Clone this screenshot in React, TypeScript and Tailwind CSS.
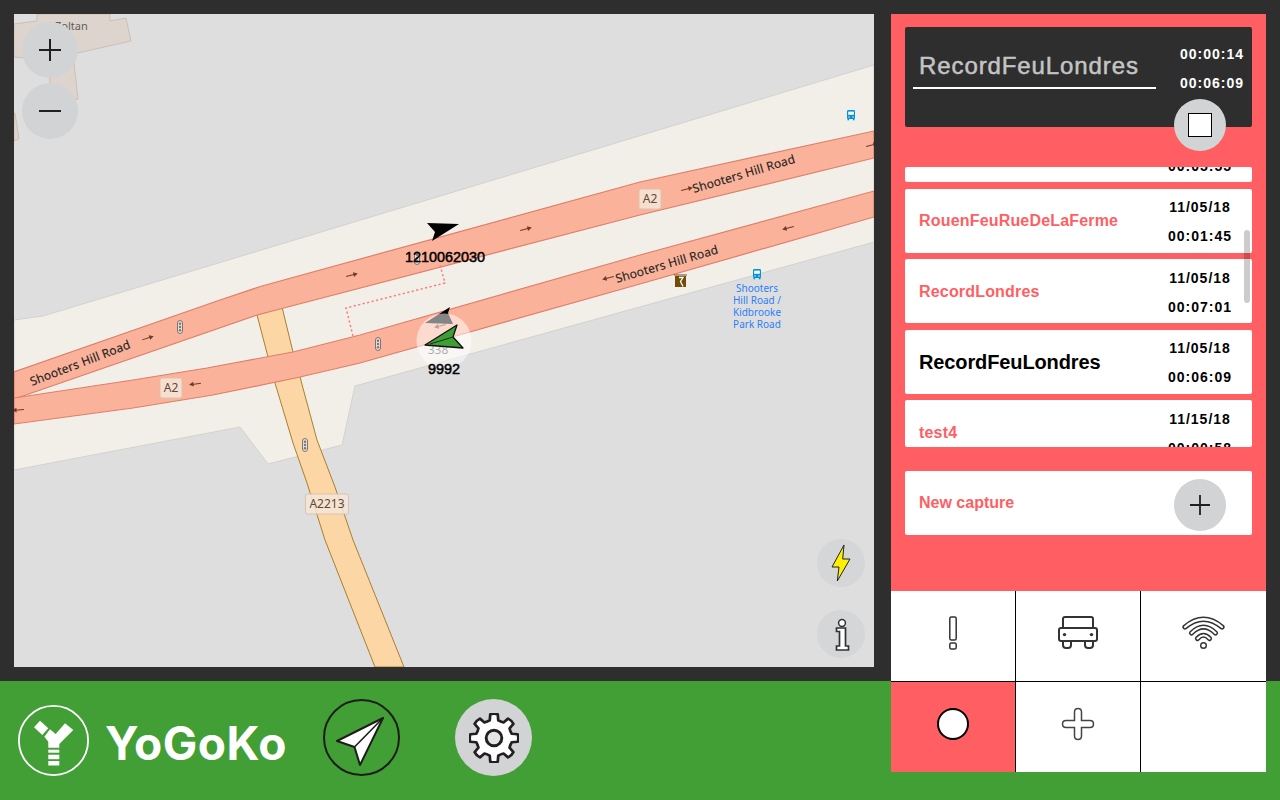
import React from "react";

const gearPath = (() => {
  const cx = 24, cy = 24, teeth = 8, R = 23, r = 17.5;
  const pts: string[] = [];
  for (let i = 0; i < teeth; i++) {
    const a = (i * 2 * Math.PI) / teeth - Math.PI / 2;
    const step = (2 * Math.PI) / teeth;
    const p = (rad: number, ang: number) => `${(cx + rad * Math.cos(ang)).toFixed(2)} ${(cy + rad * Math.sin(ang)).toFixed(2)}`;
    pts.push(`${i === 0 ? "M" : "L"}${p(r, a - step * 0.3)}`);
    pts.push(`L${p(R, a - step * 0.2)}`);
    pts.push(`Q${p(R + 1, a)} ${p(R, a + step * 0.2)}`);
    pts.push(`L${p(r, a + step * 0.3)}`);
    pts.push(`Q${p(r - 0.6, a + step * 0.5)} ${p(r, a + step * 0.7)}`);
  }
  return pts.join(" ") + "Z";
})();

const Arrow = ({ x, y, a }: { x: number; y: number; a: number }) => (
  <g transform={`translate(${x} ${y}) rotate(${a})`} fill="#6e3b2c" stroke="none">
    <rect x={-6} y={-0.5} width={9} height={1} />
    <path d="M6 0 L1.5 -2.4 L1.5 2.4 Z" />
  </g>
);

const Signal = ({ x, y }: { x: number; y: number }) => (
  <g transform={`translate(${x} ${y})`}>
    <rect x={-2.5} y={-6.5} width={5} height={13} rx={2.5} fill="#e9e2dc" stroke="#6f6f6f" strokeWidth={1} opacity={0.9} />
    <circle cy={-3.3} r={1.2} fill="#777" />
    <circle cy={0} r={1.2} fill="#777" />
    <circle cy={3.3} r={1.2} fill="#777" />
  </g>
);

const Bus = ({ x, y }: { x: number; y: number }) => (
  <g transform={`translate(${x} ${y})`}>
    <rect x={-4} y={-5} width={8} height={9} rx={1.3} fill="#0092da" />
    <rect x={-2.8} y={-3.4} width={5.6} height={3.2} fill="#fff" />
    <rect x={-3.5} y={3.5} width={1.6} height={1.8} fill="#0092da" />
    <rect x={1.9} y={3.5} width={1.6} height={1.8} fill="#0092da" />
    <circle cx={-2} cy={2} r={0.7} fill="#fff" />
    <circle cx={2} cy={2} r={0.7} fill="#fff" />
  </g>
);

const Shield = ({ x, y, w, label, size = 12 }: { x: number; y: number; w: number; label: string; size?: number }) => (
  <g>
    <rect x={x - w / 2} y={y - 10} width={w} height={20} rx={2} fill="#f6e6d8" fillOpacity={0.85} stroke="#d9c3ae" strokeWidth={1} />
    <text x={x} y={y + 4.3} textAnchor="middle" fontFamily="'Noto Sans',sans-serif" fontSize={size} fill="#5b4a3a">{label}</text>
  </g>
);

const RoadLabel = ({ x, y, a }: { x: number; y: number; a: number }) => (
  <text transform={`translate(${x} ${y}) rotate(${a})`} fontFamily="'Noto Sans',sans-serif" fontSize={12} letterSpacing={0.15} fill="#222" stroke="#222" strokeWidth={0.12}>Shooters Hill Road</text>
);

const MapDrawing = () => (
  <svg viewBox="14 14 860 653" className="block w-full h-full">
    <rect x={14} y={14} width={860} height={653} fill="#dedede" />
    <path d="M14 24 L37 21 L37 14 L110 14 L110 21 L126 18 L131 41 L73 54 L78 99 L52 105 L48 60 L14 57Z" fill="#dcd4cd" stroke="#c7b9ad" strokeWidth={0.8} />
    <path d="M14 113 L15 113 L19 139 L14 141Z" fill="#dcd4cd" stroke="#c7b9ad" strokeWidth={0.8} />
    <text x={55} y={30} fontFamily="'Noto Sans',sans-serif" fontSize={11} fill="#5e5e5e">Zoltan</text>
    <path d="M14 320 L43 316 L874 65 L874 242 L355 386 L342 445 L268 464 L240 427 L14 470Z" fill="#f2efe9" stroke="#d4d2cd" strokeWidth={1} />
    <path d="M257 315 L268 357 L275 383 L293 443 L307 483 L325 540 L375 667 L404 667 L353 540 L335 487 L317 440 L300 377 L293 352 L282 307Z" fill="#fcd6a4" stroke="#a8802f" strokeWidth={1} />
    <path d="M14 372 L220 300 L262 286 L640 182 L874 131 L874 158 L640 215 L257 315 L20 397 L14 399Z" fill="#fbb29a" stroke="#df7f69" strokeWidth={1.2} />
    <path d="M14 398 L133 380 L207 368 L293 352 L360 335 L640 255 L874 191 L874 217 L640 284 L360 363 L300 377 L213 395 L133 408 L14 424Z" fill="#fbb29a" stroke="#df7f69" strokeWidth={1.2} />
    <path d="M353 336 L346 308 L445 283 L440 265" fill="none" stroke="#fb7c7c" strokeWidth={1.5} strokeDasharray="2.2 2.4" />
    <RoadLabel x={694} y={193} a={-16.6} />
    <RoadLabel x={617} y={283} a={-16.3} />
    <RoadLabel x={32} y={386} a={-21} />
    <Arrow x={352} y={275} a={-14} />
    <Arrow x={526} y={229} a={-14} />
    <Arrow x={687} y={189} a={-14} />
    <Arrow x={872} y={145} a={-14} />
    <Arrow x={148} y={338} a={-18} />
    <Arrow x={788} y={228} a={166} />
    <Arrow x={608} y={278} a={166} />
    <Arrow x={195} y={384} a={172} />
    <Arrow x={18} y={410} a={176} />
    <Arrow x={440} y={326} a={166} />
    <Signal x={180} y={327} />
    <Signal x={378} y={344} />
    <Signal x={305} y={445} />
    <Signal x={417} y={258} />
    <Shield x={650} y={199} w={22} label="A2" />
    <Shield x={171} y={388} w={22} label="A2" />
    <Shield x={327} y={504} w={43} label="A2213" />
    <Bus x={851} y={115} />
    <Bus x={757} y={274} />
    <g fill="#734a08">
      <rect x={675} y={276} width={11} height={11} />
      <rect x={674} y={274.5} width={13} height={1} />
    </g>
    <path d="M679 277.5 L683 277.5 L680.5 281.5 L683 286.5" fill="none" stroke="#fff" strokeWidth={1.3} />
    {["Shooters", "Hill Road /", "Kidbrooke", "Park Road"].map((t, i) => (
      <text key={t} x={757} y={291.5 + i * 12} textAnchor="middle" fontFamily="'Noto Sans',sans-serif" fontSize={10} fill="#2a7fff">{t}</text>
    ))}
    <path d="M427 223 L459 224 L432 241 L435 232Z" fill="#000" />
    <text x={445} y={262} textAnchor="middle" fontFamily="'Liberation Sans',sans-serif" fontSize={14.4} fill="#000" stroke="#000" strokeWidth={0.5}>1210062030</text>
    <path d="M450 307 L425 323 L453 324 L448 313Z" fill="#000" />
    <text x={438} y={354} textAnchor="middle" fontFamily="'Noto Sans',sans-serif" fontSize={12} fill="#555">338</text>
    <circle cx={444} cy={341} r={27.5} fill="#fff" fillOpacity={0.52} />
    <path d="M425 345 L457 325 L453 337 L463 348Z" fill="#3f9e34" stroke="#111" strokeWidth={1.3} strokeLinejoin="round" />
    <path d="M430 344 L453 337" fill="none" stroke="#111" strokeWidth={0.8} />
    <text x={444} y={374} textAnchor="middle" fontFamily="'Liberation Sans',sans-serif" fontSize={14.4} fill="#000" stroke="#000" strokeWidth={0.5}>9992</text>
  </svg>
);

const Logo = () => (
  <svg width={72} height={72} viewBox="0 0 72 72" className="block shrink-0">
    <circle cx={35.5} cy={35.5} r={34.6} fill="none" stroke="#fff" strokeWidth={1.8} />
    <g fill="#fff">
      <path d="M22 15.7 L30.3 23.3 L24.3 30 L16 22.3Z" />
      <path d="M32 24.3 L37.7 29 L47 18.3 L55.3 25 L41.3 39 L41.3 42.7 L30.3 42.7 L30.3 36.7 L26.3 31.7Z" />
      <rect x={30.3} y={44.7} width={11} height={3} />
      <rect x={30.3} y={49.7} width={11} height={4.5} />
      <rect x={30.3} y={56} width={11} height={4.5} />
    </g>
  </svg>
);

const Circle = ({ className, children }: { className: string; children?: React.ReactNode }) => (
  <div className={`flex items-center justify-center rounded-full ${className}`}>{children}</div>
);

const PlusLines = ({ size, w = 2 }: { size: number; w?: number }) => (
  <svg width={size} height={size} viewBox={`0 0 ${size} ${size}`} className="block">
    <path d={`M${size / 2} 0 V${size} M0 ${size / 2} H${size}`} stroke="#231f20" strokeWidth={w} fill="none" />
  </svg>
);

type Rec = { name: string; date: string; time: string; selected?: boolean; nameShift?: string };

const records: Rec[] = [
  { name: "", date: "11/05/18", time: "00:05:55" },
  { name: "RouenFeuRueDeLaFerme", date: "11/05/18", time: "00:01:45" },
  { name: "RecordLondres", date: "11/05/18", time: "00:07:01" },
  { name: "RecordFeuLondres", date: "11/05/18", time: "00:06:09", selected: true },
  { name: "test4", date: "11/15/18", time: "00:00:58", nameShift: "pt-[2px]" },
];

const RecordCard = ({ r }: { r: Rec }) => (
  <div className="h-[64px] shrink-0 bg-white rounded-[2px] flex items-center justify-between pl-[14px] pr-[20px]">
    <div className={`${r.selected ? "text-[20px] tracking-[-0.12px] text-black" : "text-[16px] tracking-[0.18px] text-[#ff5f63] pt-[1px]"} ${r.nameShift ?? ""} font-bold leading-none`}>{r.name}</div>
    <div className="w-[64px] flex flex-col items-center text-[14px] tracking-[1px] font-bold text-black leading-[16px] gap-[13px] pt-[2px]">
      <span>{r.date}</span>
      <span>{r.time}</span>
    </div>
  </div>
);

const GridCell = ({ className = "", children }: { className?: string; children?: React.ReactNode }) => (
  <div className={`flex items-center justify-center ${className}`}>{children}</div>
);

export default function App() {
  return (
    <div className="w-[1280px] h-[800px] overflow-hidden grid grid-cols-[891px_375px_14px] grid-rows-[681px_119px] bg-[#2e2e2e] font-['Liberation_Sans',Arial,sans-serif]">
      <div className="col-start-1 row-start-1 p-[14px] pr-[17px]">
        <div className="relative w-[860px] h-[653px] overflow-hidden">
          <MapDrawing />
          <Circle className="absolute left-[8px] top-[8px] w-[56px] h-[56px] bg-[#d1d3d4]"><PlusLines size={22} /></Circle>
          <Circle className="absolute left-[8px] top-[69px] w-[56px] h-[56px] bg-[#d1d3d4]">
            <svg width={22} height={4} className="block"><path d="M0 2 H22" stroke="#231f20" strokeWidth={2} /></svg>
          </Circle>
          <Circle className="absolute left-[803px] top-[525px] w-[48px] h-[48px] bg-[#d5d6d7]">
            <svg width={48} height={48} viewBox="803 525 48 48" className="block">
              <path d="M830 531 L818 553 L825 553 L823.3 567 L836 545 L828.7 545Z" fill="#ffef00" stroke="#222" strokeWidth={1} />
            </svg>
          </Circle>
          <Circle className="absolute left-[803px] top-[596px] w-[48px] h-[48px] bg-[#d5d6d7]">
            <svg width={48} height={48} viewBox="803 596 48 48" className="block">
              <circle cx={828} cy={609} r={3.4} fill="#fff" stroke="#333" strokeWidth={1.5} />
              <path d="M822.5 614 H831.5 V632 H834.5 V636 H822.5 V632 H825.5 V617.5 H822.5Z" fill="#fff" stroke="#333" strokeWidth={1.7} />
            </svg>
          </Circle>
        </div>
      </div>

      <div className="col-start-1 col-end-4 row-start-2 bg-[#429f36] flex items-start pl-[18px]">
        <div className="mt-[24px]"><Logo /></div>
        <div className="ml-[15px] mt-[33px] font-['Inter',sans-serif] font-bold text-[46px] tracking-[0.5px] leading-[58px] text-white w-[218px]">YoGoKo</div>
        <Circle className="mt-[18px] w-[77px] h-[77px] border-[2.5px] border-[#1d1d1b]">
          <svg width={60} height={60} viewBox="331 707 60 60" className="block">
            <path d="M382 717 L336 740 L353.5 746 L359 764Z" fill="#fff" stroke="#1d1d1b" strokeWidth={2} strokeLinejoin="round" />
            <path d="M382 717 L353.5 746" fill="none" stroke="#1d1d1b" strokeWidth={1.6} />
          </svg>
        </Circle>
        <Circle className="ml-[55px] mt-[18px] w-[77px] h-[77px] bg-[#d1d3d4]">
          <svg width={50} height={50} viewBox="0 0 48 48" className="block">
            <path d={gearPath} fill="#fff" stroke="#231f20" strokeWidth={2.6} strokeLinejoin="round" />
            <circle cx={24} cy={24} r={7.5} fill="#e4e5e6" stroke="#231f20" strokeWidth={2.8} />
          </svg>
        </Circle>
      </div>

      <div className="col-start-2 row-start-1 row-end-3 mt-[14px] h-[758px] flex flex-col">
        <div className="h-[577px] bg-[#ff5f63] px-[14px] pt-[13px] flex flex-col">
          <div className="relative h-[100px] shrink-0 bg-[#2e2e2e] rounded-[2px] flex items-start">
            <div className="w-[243px] ml-[8px] mt-[24px] h-[38px] border-b-2 border-white pl-[6px] text-[24px] leading-[30px] tracking-[0.9px] [-webkit-text-stroke:0.5px_#c4c4c4] text-[#c4c4c4]">RecordFeuLondres</div>
            <div className="ml-[24px] mt-[19px] flex flex-col gap-[13px] text-[14px] leading-[16px] tracking-[1px] font-bold text-white">
              <span>00:00:14</span>
              <span>00:06:09</span>
            </div>
            <Circle className="absolute left-[269px] top-[72px] w-[52px] h-[52px] bg-[#d1d3d4]">
              <div className="w-[24px] h-[24px] bg-white border-[1.5px] border-black" />
            </Circle>
          </div>
          <div className="relative mt-[40px] h-[280px] overflow-hidden shrink-0 rounded-[2px]">
            <div className="flex flex-col gap-[6.5px] mt-[-48.9px]">
              {records.map((r) => <RecordCard key={r.time} r={r} />)}
            </div>
            <div className="absolute left-[339px] top-[63px] w-[6px] h-[73px] rounded-[3px] bg-black/20" />
          </div>
          <div className="mt-[24px] h-[64px] bg-white rounded-[2px] flex items-center justify-between pl-[14px] pr-[26px]">
            <span className="text-[16px] font-bold text-[#ff5f63]">New capture</span>
            <Circle className="w-[52px] h-[52px] bg-[#d1d3d4] mt-[4px]"><PlusLines size={20} w={1.8} /></Circle>
          </div>
        </div>
        <div className="h-[181px] bg-white grid grid-cols-[125px_125px_125px] grid-rows-[91px_90px]">
          <GridCell className="border-r border-b border-black pb-[7px]">
            <svg width={14} height={34} viewBox="0 0 14 34" className="block">
              <rect x={3.8} y={1} width={6.4} height={23} rx={1.5} fill="#fff" stroke="#333" strokeWidth={1.5} />
              <rect x={3.8} y={27} width={6.4} height={6} rx={1.6} fill="#fff" stroke="#333" strokeWidth={1.5} />
            </svg>
          </GridCell>
          <GridCell className="border-r border-b border-black pb-[7px]">
            <svg width={40} height={33} viewBox="0 0 40 33" className="block">
              <path d="M5 12 V3 Q5 1 7 1 H33 Q35 1 35 3 V12" fill="none" stroke="#333" strokeWidth={2} />
              <path d="M5 25 V29 Q5 32 8 32 H10 Q13 32 13 29 V25 M27 25 V29 Q27 32 30 32 H32 Q35 32 35 29 V25" fill="none" stroke="#333" strokeWidth={2} />
              <rect x={1} y={12} width={38} height={13} rx={2} fill="#fff" stroke="#333" strokeWidth={2} />
              <circle cx={6.5} cy={18.6} r={1.7} fill="#333" />
              <circle cx={33.5} cy={18.6} r={1.7} fill="#333" />
            </svg>
          </GridCell>
          <GridCell className="border-b border-black pb-[7px]">
            <svg width={44} height={33} viewBox="0 -1 44 33" className="block overflow-visible">
              {["M3 10 Q21.5 -5.5 40 10", "M9.5 16 Q21.5 4 33.5 16", "M15.5 21.5 Q21.5 15 27.5 21.5"].map((d) => (
                <g key={d} fill="none" strokeLinecap="round">
                  <path d={d} stroke="#333" strokeWidth={5.2} />
                  <path d={d} stroke="#fff" strokeWidth={2.2} />
                </g>
              ))}
              <circle cx={21.5} cy={28.5} r={2.8} fill="#fff" stroke="#333" strokeWidth={1.4} />
            </svg>
          </GridCell>
          <GridCell className="border-r border-black bg-[#ff5f63] pb-[6px]">
            <div className="w-[32px] h-[32px] rounded-full bg-white border-2 border-black" />
          </GridCell>
          <GridCell className="border-r border-black pb-[6px]">
            <svg width={34} height={34} viewBox="0 0 34 34" className="block">
              <path d="M13.5 5 Q13.5 1.5 17 1.5 Q20.5 1.5 20.5 5 V13.5 H29 Q32.5 13.5 32.5 17 Q32.5 20.5 29 20.5 H20.5 V29 Q20.5 32.5 17 32.5 Q13.5 32.5 13.5 29 V20.5 H5 Q1.5 20.5 1.5 17 Q1.5 13.5 5 13.5 H13.5Z" fill="#fff" stroke="#444" strokeWidth={1.5} />
            </svg>
          </GridCell>
          <GridCell />
        </div>
      </div>
    </div>
  );
}
